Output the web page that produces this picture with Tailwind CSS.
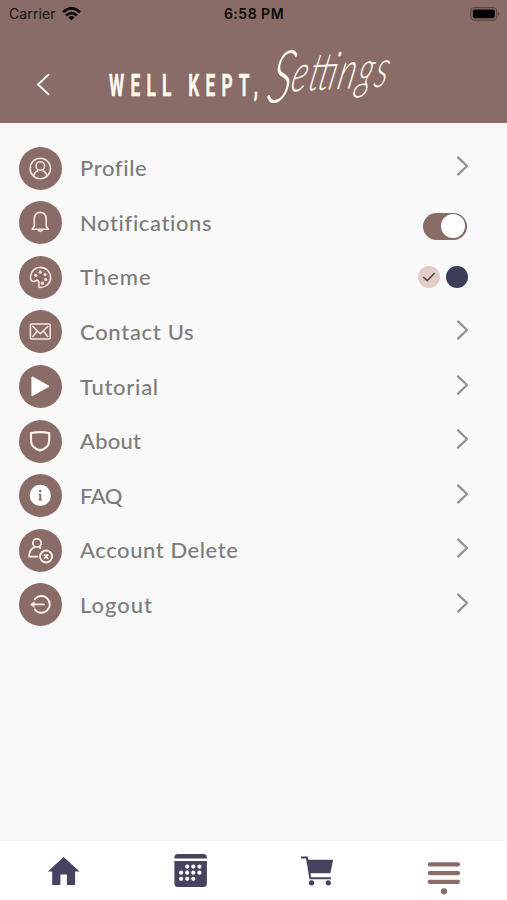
<!DOCTYPE html>
<html lang="en">
<head>
<meta charset="utf-8">
<title>Settings</title>
<script src="https://cdn.jsdelivr.net/npm/@tailwindcss/browser@4"></script>
</head>
<body class="w-[507px] h-[900px] overflow-hidden bg-[#f9f9f9] font-['Lato','Open_Sans',sans-serif] flex flex-col">
<header class="h-[123px] shrink-0 bg-[#896c67] flex flex-col">
  <div class="h-[28px] grid grid-cols-3 items-center pl-[9px] pr-[7px] font-['Inter',sans-serif] text-[#181311] text-[14px] leading-[28px]">
    <div class="flex items-center gap-[6px]"><span class="tracking-[0.1px]">Carrier</span>
      <svg class="w-[19px] h-[14px]" viewBox="0 0 19 14" fill="none" stroke="#080505" stroke-width="2.7"><path d="M1 5.2Q9.5-2.4 18 5.2M4 8.5Q9.5 3.6 15 8.5"/><path d="M6.4 10.2Q9.5 7.7 12.6 10.2L9.5 13.6Z" fill="#080505" stroke="none"/></svg>
    </div>
    <div class="text-center font-semibold text-[#0c0807] tracking-[0.5px] -ml-[1px]">6:58 PM</div>
    <svg class="justify-self-end w-[30px] h-[14px]" viewBox="0 0 30 14"><rect x=".8" y=".6" width="26" height="12.6" rx="3.6" fill="none" stroke="#5b4643" stroke-width="1.2"/><rect x="2.8" y="2.5" width="22" height="8.8" rx="1.8"/><path d="M28 4.8Q30.8 7 28 9.2Z" fill="#5b4643"/></svg>
  </div>
  <div class="flex h-[95px]">
    <svg class="w-[60px] h-[95px]" viewBox="0 0 60 95" fill="none" stroke="#fffaf5" stroke-width="1.9" stroke-linecap="round" stroke-linejoin="round"><path d="M48.5 46.6L38 56.5L48.5 66.3"/></svg>
    <svg class="w-[400px] h-[95px] overflow-visible" viewBox="60 28 400 95" fill="#fff9f2">
      <text transform="translate(109 95.5) scale(.55 1)" font-family="Roboto, sans-serif" font-weight="700" font-size="31.5" textLength="271" lengthAdjust="spacing" stroke="#fff9f2" stroke-width=".4">WELL KEPT,</text>
      <text transform="translate(265 103) rotate(-3) skewX(-16) scale(.64 1)" font-family="Lato, sans-serif" font-style="italic" font-weight="300" font-size="72">S<tspan font-size="52" dx="-2" dy="-10" textLength="151" lengthAdjust="spacing">ettings</tspan></text>
    </svg>
  </div>
</header>
<main class="flex-1 pt-[17.9px] pl-[19px] pr-[38px] text-[#7c7c7c] text-[22px] leading-[30px] font-medium">
  <div class="flex items-center h-[54.6px]">
    <svg class="size-[43px] mr-[18px]" viewBox="0 0 43 43" fill="none" stroke="#f6e5dc" stroke-width="1.6"><circle cx="21.5" cy="21.5" r="21.5" fill="#896c67" stroke="none"/><circle cx="21.3" cy="21.5" r="10.2"/><circle cx="21.3" cy="19" r="4.3"/><path d="M14.7 29.2C15 25 18 24 19 23.6M27.9 29.2C27.6 25 24.6 24 23.6 23.6"/></svg>
    <span class="flex-1 tracking-[0.6px]">Profile</span>
    <svg class="w-[14px] h-[22px] mb-[4px]" viewBox="0 0 14 22" fill="none" stroke="#929292" stroke-width="2.2" stroke-linecap="round" stroke-linejoin="round"><path d="M3 2.4L12 11L3 19.6"/></svg>
  </div>
  <div class="flex items-center h-[54.6px]">
    <svg class="size-[43px] mr-[18px]" viewBox="0 0 43 43" fill="none" stroke="#f6e5dc" stroke-width="1.6" stroke-linejoin="round"><circle cx="21.5" cy="21.5" r="21.5" fill="#896c67" stroke="none"/><path d="M13.2 28.3L15.3 24.8V17.7C15.3 9.2 27.2 9.2 27.2 17.7V24.8L29.3 28.3ZM19.1 28.8Q21.2 32.2 23.4 28.8"/></svg>
    <span class="flex-1 tracking-[0.6px]">Notifications</span>
    <span class="flex justify-end w-[44px] h-[27px] rounded-full bg-[#896c67] p-[1.5px] mt-[7px] mr-[2.5px]"><span class="size-[24px] rounded-full bg-white"></span></span>
  </div>
  <div class="flex items-center h-[54.6px]">
    <svg class="size-[43px] mr-[18px]" viewBox="0 0 43 43"><circle cx="21.5" cy="21.5" r="21.5" fill="#896c67"/><path d="M11.5 21.5C11.8 15 16 11.4 21.3 11.4C27 11.4 31.6 15.6 31.6 21.4C31.6 27.5 27 31.6 20.9 31.5Q19.2 31.4 19.8 29.5Q20.8 24.6 18 24.1Q15.5 26.2 13 25Q11.5 24.2 11.5 21.5Z" fill="none" stroke="#f6e5dc" stroke-width="1.6"/><g fill="#f6e5dc"><circle cx="16.7" cy="19.3" r="1.6"/><circle cx="21.3" cy="16.2" r="1.6"/><circle cx="26" cy="18.6" r="1.6"/><circle cx="26.7" cy="23.6" r="1.6"/><circle cx="23.4" cy="27.2" r="1.6"/></g></svg>
    <span class="flex-1 tracking-[1px]">Theme</span>
    <span class="flex gap-[6px] mr-[1px]">
      <svg class="size-[22px]" viewBox="0 0 22 22"><circle cx="11" cy="11" r="11" fill="#e2cdc9"/><path d="M5.2 11L9.2 14.7L16.7 7" fill="none" stroke="#50423f" stroke-width="1.6"/></svg>
      <span class="size-[22px] rounded-full bg-[#3b3e56]"></span>
    </span>
  </div>
  <div class="flex items-center h-[54.6px]">
    <svg class="size-[43px] mr-[18px]" viewBox="0 0 43 43" fill="none" stroke="#f6e5dc" stroke-width="1.6" stroke-linejoin="round"><circle cx="21.5" cy="21.5" r="21.5" fill="#896c67" stroke="none"/><rect x="11.4" y="14" width="19.8" height="15" rx="1.2"/><path d="M13.3 16L21.3 23.8L29.3 16M13.5 27L18 21.2M29.1 27L24.6 21.2"/></svg>
    <span class="flex-1 tracking-[0.7px]">Contact Us</span>
    <svg class="w-[14px] h-[22px] mb-[4px]" viewBox="0 0 14 22" fill="none" stroke="#929292" stroke-width="2.2" stroke-linecap="round" stroke-linejoin="round"><path d="M3 2.4L12 11L3 19.6"/></svg>
  </div>
  <div class="flex items-center h-[54.6px]">
    <svg class="size-[43px] mr-[18px]" viewBox="0 0 43 43"><circle cx="21.5" cy="21.5" r="21.5" fill="#896c67"/><path d="M13.3 12.3L29.2 21.2L13.3 30.3Z" fill="#fff" stroke="#fff" stroke-width="1.8" stroke-linejoin="round"/></svg>
    <span class="flex-1 tracking-[0.7px]">Tutorial</span>
    <svg class="w-[14px] h-[22px] mb-[4px]" viewBox="0 0 14 22" fill="none" stroke="#929292" stroke-width="2.2" stroke-linecap="round" stroke-linejoin="round"><path d="M3 2.4L12 11L3 19.6"/></svg>
  </div>
  <div class="flex items-center h-[54.6px]">
    <svg class="size-[43px] mr-[18px]" viewBox="0 0 43 43"><circle cx="21.5" cy="21.5" r="21.5" fill="#896c67"/><path d="M12 13Q21 11.1 30.2 13V20.5C30.2 25.5 26.3 29 21.1 30.4C15.9 29 12 25.5 12 20.5Z" fill="none" stroke="#fff4e9" stroke-width="2.2" stroke-linejoin="round"/></svg>
    <span class="flex-1 tracking-[0.2px]">About</span>
    <svg class="w-[14px] h-[22px] mb-[4px]" viewBox="0 0 14 22" fill="none" stroke="#929292" stroke-width="2.2" stroke-linecap="round" stroke-linejoin="round"><path d="M3 2.4L12 11L3 19.6"/></svg>
  </div>
  <div class="flex items-center h-[54.6px]">
    <svg class="size-[43px] mr-[18px]" viewBox="0 0 43 43"><circle cx="21.5" cy="21.5" r="21.5" fill="#896c67"/><circle cx="21.3" cy="21.4" r="10.6" fill="#fff"/><g fill="#806b65"><circle cx="21.2" cy="17" r="1.3"/><path d="M19.5 19.7H22.2V25.3H23V26.6H19.5V25.3H20.3V21H19.5Z"/></g></svg>
    <span class="flex-1 tracking-[-0.5px]">FAQ</span>
    <svg class="w-[14px] h-[22px] mb-[4px]" viewBox="0 0 14 22" fill="none" stroke="#929292" stroke-width="2.2" stroke-linecap="round" stroke-linejoin="round"><path d="M3 2.4L12 11L3 19.6"/></svg>
  </div>
  <div class="flex items-center h-[54.6px]">
    <svg class="size-[43px] mr-[18px]" viewBox="0 0 43 43" fill="none" stroke="#fff0e6" stroke-width="1.8"><circle cx="21.5" cy="21.5" r="21.5" fill="#896c67" stroke="none"/><circle cx="18" cy="14" r="4.2"/><path d="M19.3 27.7H10.2C10 22.3 12 19.6 15.7 18.1M20.2 18.2L22 19.4"/><circle cx="27.1" cy="27.5" r="6"/><path d="M25 25.4L29.2 29.6M29.2 25.4L25 29.6M27.1 25.8V29.2" stroke-width="2"/></svg>
    <span class="flex-1 tracking-[0.57px]">Account Delete</span>
    <svg class="w-[14px] h-[22px] mb-[4px]" viewBox="0 0 14 22" fill="none" stroke="#929292" stroke-width="2.2" stroke-linecap="round" stroke-linejoin="round"><path d="M3 2.4L12 11L3 19.6"/></svg>
  </div>
  <div class="flex items-center h-[54.6px]">
    <svg class="size-[43px] mr-[18px]" viewBox="0 0 43 43" fill="none" stroke="#fff0e6" stroke-width="1.9" stroke-linecap="round" stroke-linejoin="round"><circle cx="21.5" cy="21.5" r="21.5" fill="#896c67" stroke="none"/><path d="M15.8 16.2A8.4 8.4 0 1 1 15.8 26.6M25 21.4H12.8"/><path d="M11.8 21.4L15.2 18.7V24.1Z" fill="#fff0e6" stroke-width=".6"/></svg>
    <span class="flex-1 tracking-[0.95px]">Logout</span>
    <svg class="w-[14px] h-[22px] mb-[4px]" viewBox="0 0 14 22" fill="none" stroke="#929292" stroke-width="2.2" stroke-linecap="round" stroke-linejoin="round"><path d="M3 2.4L12 11L3 19.6"/></svg>
  </div>
</main>
<nav class="h-[60px] shrink-0 border-t border-[#f1f1f1] bg-white grid grid-cols-4 justify-items-center">
  <svg class="w-[34px] h-[59px]" viewBox="46.4 841 34 59"><path d="M64 857L80 871.5H75.5V885H67.3V874.5H60.8V885H52.6V871.5H48.3Z" fill="#45435f"/></svg>
  <svg class="w-[34px] h-[59px]" viewBox="173.1 841 34 59"><path d="M174.5 858.5V857.5Q174.5 854 178 854H203.5Q207 854 207 857.5V858.5ZM174.5 861H207V883.5Q207 887 203.5 887H178Q174.5 887 174.5 883.5Z" fill="#45435f"/><g fill="#fff"><circle cx="187.3" cy="866.6" r="2.1"/><circle cx="193.4" cy="866.6" r="2.1"/><circle cx="199.5" cy="866.6" r="2.1"/><circle cx="181.2" cy="872.7" r="2.1"/><circle cx="187.3" cy="872.7" r="2.1"/><circle cx="193.4" cy="872.7" r="2.1"/><circle cx="199.5" cy="872.7" r="2.1"/><circle cx="181.2" cy="878.8" r="2.1"/><circle cx="187.3" cy="878.8" r="2.1"/><circle cx="193.4" cy="878.8" r="2.1"/></g></svg>
  <svg class="w-[34px] h-[59px]" viewBox="299.9 841 34 59"><path d="M306.8 859.8H333L330.3 873.3H309.3Z" fill="#45435f"/><path d="M300.8 857.4H306.8L310.2 878.2H330.8" fill="none" stroke="#45435f" stroke-width="2"/><circle cx="311.5" cy="882.8" r="2.6" fill="#45435f"/><circle cx="328.2" cy="882.8" r="2.6" fill="#45435f"/></svg>
  <svg class="w-[34px] h-[59px]" viewBox="427 841 34 59"><path d="M429.8 864.3H458M429.8 873.1H458M429.8 881.8H458" stroke="#896c67" stroke-width="4.2" stroke-linecap="round"/><circle cx="444" cy="891.3" r="3.1" fill="#896c67"/></svg>
</nav>
</body>
</html>
